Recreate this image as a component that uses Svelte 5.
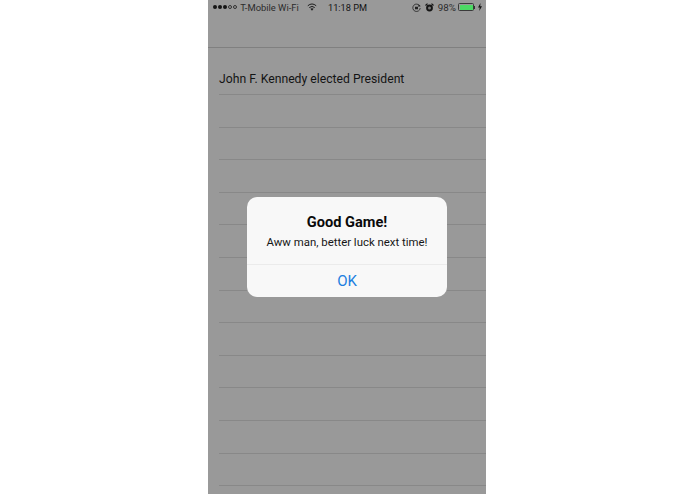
<script>
  const emptyRows = Array(12).fill(0);
</script>

<div class="page">
  <div class="phone">
    <div class="status">
      <div class="left">
        <span class="signal">
          <i class="dot"></i><i class="dot"></i><i class="dot"></i><i class="dot off"></i><i class="dot off"></i>
        </span>
        <span class="carrier">T-Mobile Wi-Fi</span>
        <svg class="wifi" width="10" height="8" viewBox="0 0 20 15">
          <path d="M10 15 L6.8 11.2 A5 5 0 0 1 13.2 11.2 Z" fill="#1c1c1c" />
          <path d="M4.6 8.6 A8.4 8.4 0 0 1 15.4 8.6" fill="none" stroke="#1c1c1c" stroke-width="2" />
          <path d="M1.6 5 A13 13 0 0 1 18.4 5" fill="none" stroke="#1c1c1c" stroke-width="2" />
        </svg>
      </div>
      <span class="time">11:18 PM</span>
      <div class="right">
        <svg class="lock" width="9" height="9" viewBox="0 0 18 18">
          <path d="M15.5 6 A7.4 7.4 0 1 0 16.4 10" fill="none" stroke="#222" stroke-width="1.6" />
          <path d="M13 2.5 L17.5 6.5 L12.5 7.5 Z" fill="#222" />
          <rect x="6" y="7.5" width="6" height="5" fill="#222" />
        </svg>
        <svg class="alarm" width="9" height="9" viewBox="0 0 18 18">
          <circle cx="9" cy="10" r="6.8" fill="#151515" />
          <circle cx="9" cy="10" r="3" fill="#777" />
          <path d="M1 5 L5 1.2 M17 5 L13 1.2" stroke="#151515" stroke-width="2.4" />
        </svg>
        <span class="pct">98%</span>
        <div class="battery"><div class="fill"></div></div>
        <i class="nub"></i>
        <svg class="bolt" width="4" height="8" viewBox="0 0 8 16">
          <path d="M5 0 L0 9 L3.4 9 L2.6 16 L8 6.5 L4.4 6.5 Z" fill="#151515" />
        </svg>
      </div>
    </div>

    <div class="nav"></div>

    <div class="row first"><span>John F. Kennedy elected President</span></div>
    {#each emptyRows as _}
      <div class="row"></div>
    {/each}

    <div class="alert">
      <div class="body">
        <div class="title">Good Game!</div>
        <div class="message">Aww man, better luck next time!</div>
      </div>
      <div class="button">OK</div>
    </div>
  </div>
</div>

<style>
  :global(body) {
    margin: 0;
    background: #fff;
  }

  .page {
    height: 494px;
    display: flex;
    padding-left: 208px;
    overflow: hidden;
    font-family: Roboto, "Liberation Sans", sans-serif;
  }

  .phone {
    position: relative;
    width: 278px;
    height: 494px;
    background: #999999;
    overflow: hidden;
    flex-shrink: 0;
  }

  .status {
    height: 14px;
    display: grid;
    grid-template-columns: 1fr auto 1fr;
    align-items: center;
    padding: 0 4px 0 5px;
    font-size: 9.4px;
    color: #1f1f1f;
  }

  .left,
  .right {
    display: flex;
    align-items: center;
  }

  .right {
    justify-content: flex-end;
  }

  .signal {
    display: flex;
    gap: 0.6px;
    margin-right: 3px;
  }

  .dot {
    width: 4.4px;
    height: 4.4px;
    border-radius: 50%;
    background: #151515;
    box-sizing: border-box;
  }

  .dot.off {
    background: none;
    border: 0.6px solid #333;
  }

  .carrier {
    color: #2b2b2b;
  }

  .wifi {
    margin-left: 8px;
  }

  .time {
    font-size: 9.2px;
    color: #141414;
  }

  .lock {
    margin-right: 4px;
  }

  .alarm {
    margin-right: 4px;
  }

  .pct {
    font-size: 9.8px;
    color: #2b2b2b;
    margin-right: 2px;
  }

  .battery {
    width: 16px;
    height: 8px;
    padding: 0.5px;
    border: 0.5px solid #3a3a3a;
    border-radius: 1.5px;
    box-sizing: border-box;
    display: flex;
  }

  .fill {
    flex: 1;
    background: #4cd964;
    border-radius: 0.5px;
  }

  .nub {
    width: 1px;
    height: 3px;
    background: #333;
    margin-right: 3px;
  }

  .nav {
    height: 33px;
    border-bottom: 1px solid #808080;
  }

  .row {
    height: 31.6px;
    margin-left: 11px;
    border-bottom: 1px solid #888;
  }

  .row.first {
    height: 31px;
    padding-top: 15px;
    display: flex;
    align-items: center;
    font-size: 12.2px;
    color: #141414;
  }

  .alert {
    position: absolute;
    left: 39px;
    top: 197px;
    width: 200px;
    height: 100px;
    display: flex;
    flex-direction: column;
    border-radius: 10px;
    overflow: hidden;
    background: #f8f8f8;
    text-align: center;
  }

  .body {
    flex: 1;
    padding-top: 16px;
    border-bottom: 1px solid #ebebeb;
    box-sizing: border-box;
  }

  .title {
    font-size: 14.6px;
    font-weight: 700;
    line-height: 18px;
    color: #0a0a0a;
  }

  .message {
    font-size: 11.4px;
    line-height: 14px;
    margin-top: 4px;
    color: #161616;
  }

  .button {
    height: 32px;
    line-height: 32px;
    font-size: 15px;
    color: #1c7fe0;
  }
</style>
